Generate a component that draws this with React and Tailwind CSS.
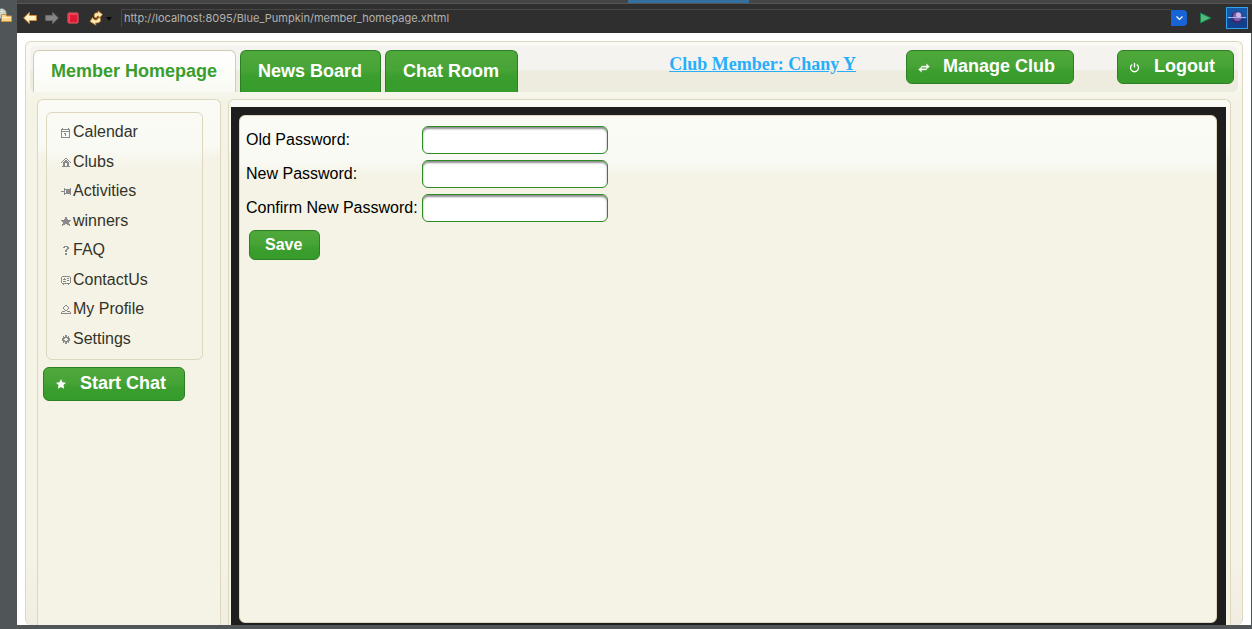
const menu = {
  Calendar: [".#.....#..", "#########.", "#.......#.", "#########.", "#.......#.", "#..##...#.", "#...#...#.", "#...#...#.", "#.......#.", "#########."],
  Clubs: ["....##....", "...#..#...", "..#.##.#..", ".#.####.#.", "#.######.#", "..##..##..", "..##..##..", "..##..##..", ".########."],
  Activities: ["..........", "...#.....#", "...#######", "...#.#####", "####.#####", "...#.#####", "...#######", "...#.....#"],
  winners: ["....##....", "....##....", "...####...", "##########", ".########.", "..######..", "..######..", ".###..###.", ".#......#."],
  FAQ: ["...####...", "..##..##..", "......##..", ".....##...", "....##....", "....##....", "..........", "....##....", "....##...."],
  ContactUs: [".########.", "#........#", "#..#..##.#", "#.###....#", "#.....##.#", "#.###....#", "#........#", ".########.", "..#....#.."],
  "My Profile": ["....##....", "...#..#...", "..#....#..", "..#....#..", "...#..#...", "....##....", ".###..###.", "#........#", "##########"],
  Settings: ["....##....", "..#.##.#..", "..######..", ".###..###.", ".##....##.", ".###..###.", "..######..", "..#.##.#..", "....##...."],
};

function PixelIcon({ rows, className }) {
  return (
    <svg viewBox="0 0 10 10" className={className} shapeRendering="crispEdges" aria-hidden="true">
      {rows.map((row, y) =>
        [...row].map((c, x) => (c === "#" ? <rect key={x + "-" + y} x={x} y={y} width="1" height="1" fill="currentColor" /> : null)),
      )}
    </svg>
  );
}

const green =
  "border border-[#2c7f24] bg-[linear-gradient(to_bottom,#4fa83a_0%,#48a437_45%,#3b9e2e_62%,#369c2b_100%)] font-bold text-white";
const cream =
  "bg-[linear-gradient(to_bottom,#fafbf5_0px,#f9faf4_46px,#f5f3e5_60px,#f5f3e5_100%)]";

function Tab({ children, active }) {
  return (
    <a
      href="#"
      className={
        active
          ? "flex h-[42px] items-center rounded-t-md border border-b-0 border-[#d4ccb0] bg-linear-to-b from-white to-[#fafaf4] pr-[18px] pb-0.5 pl-[17px] text-lg font-bold text-[#3a9e2f]"
          : "flex h-[42px] items-center rounded-t-md border border-b-0 border-[#2c7f24] bg-[linear-gradient(to_bottom,#4fa83a_0%,#48a437_45%,#3b9e2e_62%,#369c2b_100%)] pr-[18px] pb-0.5 pl-[17px] text-lg font-bold text-white"
      }
    >
      {children}
    </a>
  );
}

function IconButton({ icon, children }) {
  return (
    <button type="button" className={`flex h-[34px] items-center rounded-md pr-[18px] pl-[11px] text-lg ${green}`}>
      <span className="mr-[13px] flex w-3 shrink-0">{icon}</span>
      <span className="pb-0.5">{children}</span>
    </button>
  );
}

function Toolbar() {
  return (
    <header className="flex h-[33px] shrink-0 flex-col bg-[#2f2f2f]">
      <div className="flex h-1 shrink-0 border-b border-[#555] bg-[#454545]">
        <div className="ml-[49.5%] h-[3px] w-[121px] bg-[#336f9f]" />
      </div>
      <div className="flex h-[29px] items-center pr-1 pb-0.5 pl-1.5">
        <div className="flex shrink-0 items-center gap-2">
          <button type="button" aria-label="Back">
            <svg width="14" height="14" viewBox="0 0 14 14"><path d="M.7 7l5.600-5.600v3.100h7v5h-7v3.100z" fill="#fff3c4" stroke="#d9913a" /></svg>
          </button>
          <button type="button" aria-label="Forward">
            <svg width="14" height="14" viewBox="0 0 14 14"><path d="M13.300 7L7.700 1.400v3.100h-7v5h7v3.100z" fill="#858585" stroke="#6c6c6c" /></svg>
          </button>
          <button type="button" aria-label="Stop">
            <svg width="12" height="12" viewBox="0 0 12 12"><rect x="1" y="1" width="10" height="10" rx="1" fill="#dc1c34" stroke="#f4606c" /><path d="M2.500 9.500v-7h7" fill="none" stroke="#f04c5c" /></svg>
          </button>
          <button type="button" aria-label="Refresh" className="ml-0.5">
            <svg width="24" height="16" viewBox="0 0 24 16">
              <path d="M5.500 7.500C4.500 3.500 6 2.500 9 2.800V.8l4.500 3.700L10 8.500V6.200C8.300 6 7.500 6.300 7.500 8z" fill="#ffe9b0" stroke="#c17a2d" strokeWidth=".8" />
              <path d="M11 7.500c1.500 4 0 5.500-4.500 5.500l.5 2.200L1 11.500 3.500 7.500 5 9.500c2 .8 3.500.5 4-1.500z" fill="#ffe9b0" stroke="#c17a2d" strokeWidth=".8" />
              <path d="M17 7h6l-3 4z" fill="#080808" />
            </svg>
          </button>
        </div>
        <input
          aria-label="Address"
          defaultValue="http://localhost:8095/Blue_Pumpkin/member_homepage.xhtml"
          className="ml-2 h-[18px] min-w-0 flex-1 border-t border-l border-[#484848] bg-transparent pl-0.5 font-['Inter',sans-serif] text-[11px] text-[#b2b2b2] outline-none"
        />
        <button type="button" aria-label="Show history" className="flex size-4 items-center justify-center rounded-r-sm bg-[#1764d4]">
          <svg width="9" height="6" viewBox="0 0 9 6"><path d="M1.500 1.500l3 3 3-3" fill="none" stroke="#fff" strokeWidth="1.200" /></svg>
        </button>
        <button type="button" aria-label="Go" className="ml-3">
          <svg width="13" height="12" viewBox="0 0 13 12"><path d="M1.500 1l10.500 5-10.500 5z" fill="#55b77e" stroke="#168248" /></svg>
        </button>
        <button type="button" aria-label="Browser" className="ml-3.5">
          <svg width="22" height="22" viewBox="0 0 22 22">
            <rect x=".5" y=".5" width="21" height="21" fill="#1657a8" stroke="#2fa2ef" />
            <path d="M1 12h20v9H1z" fill="#11418d" />
            <circle cx="11" cy="10.500" r="6" fill="#3a2a6e" />
            <circle cx="11.500" cy="9.500" r="4.500" fill="#7d5fae" />
            <circle cx="12.500" cy="8" r="2.500" fill="#cbb8e6" />
            <path d="M2 10.500h18" stroke="#9fb4ec" />
          </svg>
        </button>
      </div>
    </header>
  );
}

export default function App() {
  return (
    <div className="flex h-screen overflow-hidden bg-[#505558] font-['Liberation_Sans',sans-serif]">
      <aside className="w-[17px] shrink-0 pt-2">
        <svg width="12" height="15" viewBox="0 0 12 15">
          <circle cx="1.500" cy="5.500" r="5" fill="#b9c4c2" />
          <path d="M0 3.500h5M0 6h5M2 1v8" stroke="#f3ead0" strokeWidth=".8" />
          <path d="M1.500 6.500h4l1 1.500h5v5.500h-10z" fill="#fbd68b" stroke="#c9923f" />
          <path d="M2 9.500h9" stroke="#fff0c4" />
        </svg>
      </aside>
      <div className="flex min-w-0 flex-1 flex-col pb-1">
        <Toolbar />
        <main className="mr-px flex min-h-0 flex-1 flex-col bg-white px-2 pt-2">
          <div className="flex min-h-0 flex-1 flex-col rounded-md border border-b-0 border-[#ddd7c0] bg-[linear-gradient(to_bottom,#fafaf4_0px,#f8f8f0_42px,#f5f3e5_60px,#f5f3e5_520px,#f1ede2_100%)] px-1 pt-1">
            <nav className="flex h-[46px] shrink-0 items-end rounded-md bg-linear-to-b from-[#f4f3ef] from-50% to-[#eeebdf] to-55% pr-1 pl-[3px]">
              <div className="flex gap-1">
                <Tab active>Member Homepage</Tab>
                <Tab>News Board</Tab>
                <Tab>Chat Room</Tab>
              </div>
              <div className="ml-auto flex h-[42px] items-start">
                <a href="#" className="mr-[50px] font-['Liberation_Serif',serif] text-lg font-bold text-[#28aefa] underline">
                  Club Member: Chany Y
                </a>
                <IconButton
                  icon={
                    <svg width="12" height="10" viewBox="0 0 12 10" className="mt-0.5">
                      <path d="M3.500 3h5V.8L11.500 3.700 8.500 6V4.300h-5zM8.500 7h-5v2.200L.5 6.500l3-2.500v1.700h5z" fill="currentColor" stroke="currentColor" strokeWidth=".3" />
                    </svg>
                  }
                >
                  Manage Club
                </IconButton>
                <div className="w-[43px]" />
                <IconButton
                  icon={
                    <svg width="11" height="11" viewBox="0 0 11 11" className="mt-px">
                      <path d="M3.200 2.500a4 4 0 1 0 4.600 0M5.500 1v4.500" fill="none" stroke="currentColor" strokeWidth="1.300" />
                    </svg>
                  }
                >
                  Logout
                </IconButton>
              </div>
            </nav>
            <div className="flex min-h-0 flex-1 gap-[7px] px-[7px] pt-[7px]">
              <section className={`w-[184px] shrink-0 rounded-t-md border border-b-0 border-[#ddd7c0] px-[5px] pt-3 ${cream}`}>
                <ul className="mr-3 ml-[3px] rounded-md border border-[#ddd7c0] bg-[linear-gradient(to_bottom,#fafbf5_0px,#f9faf4_36px,#f5f3e5_58px)] pt-1 pb-1.5 pl-3.5">
                  {Object.entries(menu).map(([name, rows]) => (
                    <li key={name} className="flex h-[30px] items-center even:h-[29px]">
                      <a href="#" className="flex items-center gap-0.5 text-base text-[#33332b]">
                        <PixelIcon rows={rows} className="mt-0.5 size-2.5 text-[#8a898b]" />
                        {name}
                      </a>
                    </li>
                  ))}
                </ul>
                <div className="mt-[7px] flex">
                  <IconButton
                    icon={
                      <svg width="10" height="10" viewBox="0 0 10 10" className="ml-px">
                        <path d="M5 0l1.500 3.300 3.500.4-2.500 2.400.6 3.600L5 8 1.900 9.700l.6-3.600L0 3.700l3.500-.4z" fill="currentColor" />
                      </svg>
                    }
                  >
                    Start Chat
                  </IconButton>
                </div>
              </section>
              <section className="flex min-w-0 flex-1 flex-col rounded-t-md border border-b-0 border-[#ddd7c0] bg-[linear-gradient(to_bottom,#fafbf5_0px,#f9faf4_46px,#f5f3e5_60px)] pt-[7px] pr-1 pl-0.5">
                <div className="flex min-h-0 flex-1 flex-col bg-[#1e1e1e] py-0.5 pt-2 pr-[9px] pl-2">
                  <form className={`flex-1 rounded-md border border-[#ddd7c0] px-1.5 pt-2.5 ${cream}`} onSubmit={(e) => e.preventDefault()}>
                    <div className="grid grid-cols-[max-content_186px] items-center gap-x-1 gap-y-1.5 text-base text-black">
                      {["Old Password:", "New Password:", "Confirm New Password:"].map((label, i) => (
                        <div key={label} className="contents">
                          <label htmlFor={"pw" + i}>{label}</label>
                          <input
                            id={"pw" + i}
                            type="password"
                            className="h-7 w-full rounded-md border border-[#2c8a27] bg-white px-1 shadow-[inset_0_2px_2px_#8f8f8f]"
                          />
                        </div>
                      ))}
                    </div>
                    <button type="submit" className={`mt-2 ml-[3px] flex h-[30px] items-center rounded-md pr-[17px] pl-[15px] text-base ${green}`}>
                      Save
                    </button>
                  </form>
                </div>
              </section>
            </div>
          </div>
        </main>
      </div>
    </div>
  );
}
